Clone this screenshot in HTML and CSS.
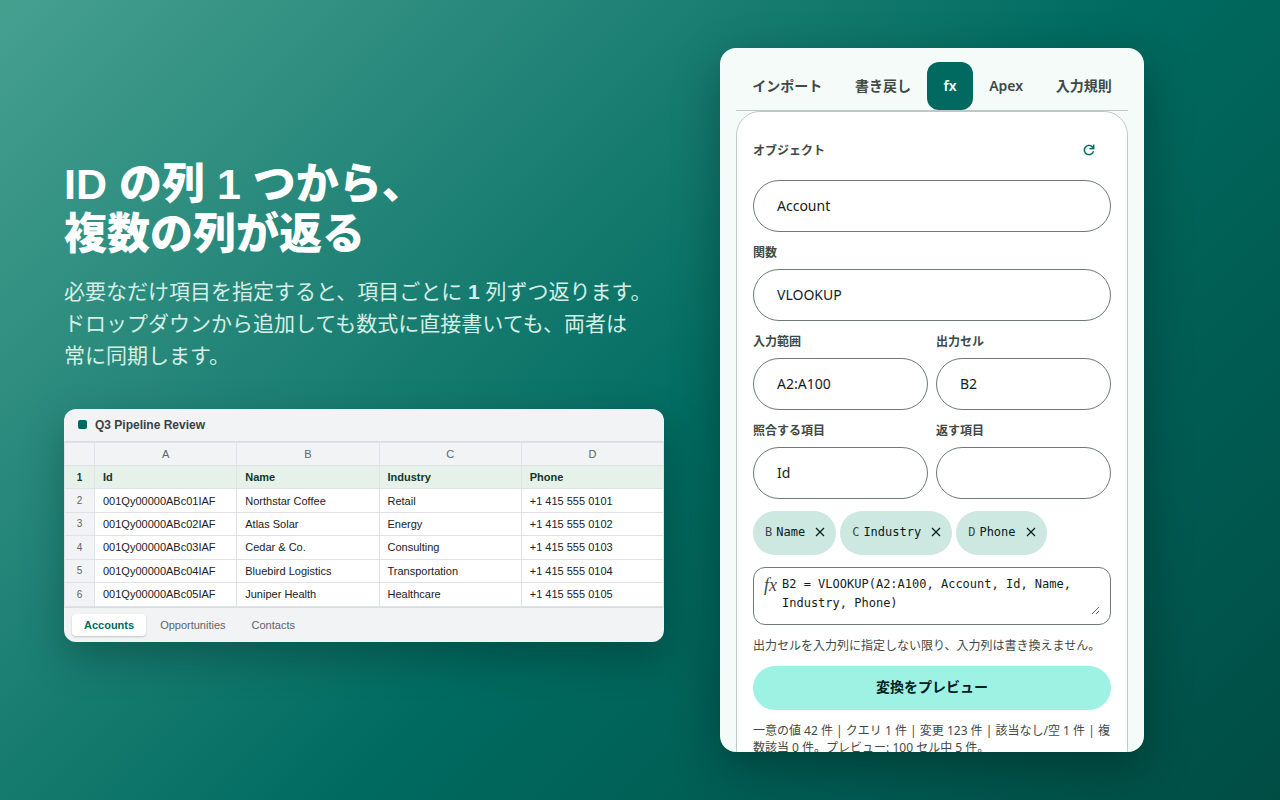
FILE: index.html
```html
<!DOCTYPE html>
<html lang="ja">
<head>
    <meta charset="UTF-8">
    <meta name="viewport" content="width=device-width, initial-scale=1.0">
    <title>ID の列 1 つから、複数の列が返る</title>
    <link rel="stylesheet" href="styles.css">
</head>
<body>

    <main class="promo">
        <h1>ID の列 1 つから、<br>複数の列が返る</h1>
        <p class="lead">必要なだけ項目を指定すると、項目ごとに <b>1</b> 列ずつ返ります。<br>ドロップダウンから追加しても数式に直接書いても、両者は<br>常に同期します。</p>

        <section class="sheet">
            <div class="sheet-title"><span class="sheet-icon"></span>Q3 Pipeline Review</div>
            <table>
                <tbody>
                    <tr><th class="row-no"></th><th>A</th><th>B</th><th>C</th><th>D</th></tr>
                    <tr class="fields"><th class="row-no">1</th><td>Id</td><td>Name</td><td>Industry</td><td>Phone</td></tr>
                    <tr><th class="row-no">2</th><td>001Qy00000ABc01IAF</td><td>Northstar Coffee</td><td>Retail</td><td>+1 415 555 0101</td></tr>
                    <tr><th class="row-no">3</th><td>001Qy00000ABc02IAF</td><td>Atlas Solar</td><td>Energy</td><td>+1 415 555 0102</td></tr>
                    <tr><th class="row-no">4</th><td>001Qy00000ABc03IAF</td><td>Cedar &amp; Co.</td><td>Consulting</td><td>+1 415 555 0103</td></tr>
                    <tr><th class="row-no">5</th><td>001Qy00000ABc04IAF</td><td>Bluebird Logistics</td><td>Transportation</td><td>+1 415 555 0104</td></tr>
                    <tr><th class="row-no">6</th><td>001Qy00000ABc05IAF</td><td>Juniper Health</td><td>Healthcare</td><td>+1 415 555 0105</td></tr>
                </tbody>
            </table>
            <div class="sheet-tabs">
                <button class="sheet-tab active">Accounts</button>
                <button class="sheet-tab">Opportunities</button>
                <button class="sheet-tab">Contacts</button>
            </div>
        </section>
    </main>

    <aside class="panel">
        <nav class="tabs">
            <button class="tab">インポート</button>
            <button class="tab">書き戻し</button>
            <button class="tab active">fx</button>
            <button class="tab">Apex</button>
            <button class="tab">入力規則</button>
        </nav>

        <form class="card">
            <div class="field">
                <div class="label-row">
                    <label for="object">オブジェクト</label>
                    <button type="button" class="refresh" aria-label="更新">
                        <svg width="16" height="16" viewBox="0 0 24 24"><path fill="currentColor" stroke="currentColor" stroke-width="0.3" d="M12 20q-3.350 0-5.675-2.325T4 12t2.325-5.675T12 4q1.725 0 3.300.713T18 6.750V4h2v7h-7V9h4.200q-.8-1.400-2.188-2.200T12 6Q9.500 6 7.750 7.750T6 12t1.750 4.250T12 18q1.925 0 3.475-1.100T17.650 14h2.100q-.7 2.650-2.850 4.325T12 20"/></svg>
                    </button>
                </div>
                <select id="object"><option>Account</option></select>
            </div>

            <div class="field">
                <label for="function">関数</label>
                <select id="function"><option>VLOOKUP</option></select>
            </div>

            <div class="pair">
                <div class="field">
                    <label for="input">入力範囲</label>
                    <input type="text" id="input" value="A2:A100">
                </div>
                <div class="field">
                    <label for="output">出力セル</label>
                    <input type="text" id="output" value="B2">
                </div>
            </div>

            <div class="pair">
                <div class="field">
                    <label for="match">照合する項目</label>
                    <select id="match"><option>Id</option></select>
                </div>
                <div class="field">
                    <label for="return">返す項目</label>
                    <select id="return"><option></option></select>
                </div>
            </div>

            <div class="chips">
                <button type="button" class="chip"><span class="col">B</span>Name<svg width="10" height="10" viewBox="0 0 10 10"><path d="M1 1l8 8M9 1l-8 8"/></svg></button>
                <button type="button" class="chip"><span class="col">C</span>Industry<svg width="10" height="10" viewBox="0 0 10 10"><path d="M1 1l8 8M9 1l-8 8"/></svg></button>
                <button type="button" class="chip"><span class="col">D</span>Phone<svg width="10" height="10" viewBox="0 0 10 10"><path d="M1 1l8 8M9 1l-8 8"/></svg></button>
            </div>

            <div class="formula">
                <label for="formula">fx</label>
                <textarea id="formula" rows="2" spellcheck="false">B2 = VLOOKUP(A2:A100, Account, Id, Name, Industry, Phone)</textarea>
            </div>

            <p class="note">出力セルを入力列に指定しない限り、入力列は書き換えません。</p>
            <button type="button" class="preview">変換をプレビュー</button>
            <p class="status">一意の値 42 件 | クエリ 1 件 | 変更 123 件 | 該当なし/空 1 件 | 複数該当 0 件。プレビュー: 100 セル中 5 件。</p>
        </form>
    </aside>

</body>
</html>
```
FILE: styles.css
```css
* {
    margin: 0;
    padding: 0;
    box-sizing: border-box;
}

body {
    display: grid;
    grid-template-columns: minmax(0, 600px) 424px;
    gap: 56px;
    align-items: center;
    height: 100vh;
    padding: 48px 64px;
    overflow: hidden;
    font-family: "Liberation Sans", "Noto Sans CJK JP", sans-serif;
    background: linear-gradient(135deg, #46a090 0%, #006a60 55%, #004d44 100%);
}

button,
input,
select,
textarea {
    font: inherit;
    color: inherit;
    border: none;
    background: none;
}

button {
    cursor: pointer;
}

/* Left side */

h1 {
    font-size: 43px;
    line-height: 50px;
    font-weight: 800;
    color: #fff;
}

.lead {
    margin: 17px 0 37px;
    font-size: 21px;
    line-height: 32px;
    white-space: nowrap;
    color: #d5efe5;
}

.sheet {
    overflow: hidden;
    border-radius: 12px;
    background: #f1f3f4;
    box-shadow: 0 16px 40px rgba(0, 0, 0, 0.25);
    font-size: 11px;
}

.sheet-title {
    display: flex;
    align-items: center;
    gap: 8px;
    height: 33px;
    padding: 0 14px;
    border-bottom: 1px solid #dadce0;
    font-size: 12px;
    font-weight: bold;
    color: #3c4043;
}

.sheet-icon {
    width: 9px;
    height: 9px;
    border-radius: 2px;
    background: #006a60;
}

table {
    width: 100%;
    height: 165px;
    table-layout: fixed;
    border-collapse: collapse;
    background: #fff;
}

tr {
    height: 23px;
}

th,
td {
    padding: 0 8px;
    border: 1px solid #dfe2e6;
    text-align: left;
    color: #202124;
}

th {
    text-align: center;
    font-weight: normal;
    color: #5f6368;
    background: #f1f3f4;
}

.row-no {
    width: 30px;
    font-size: 10px;
}

.fields th,
.fields td {
    font-weight: bold;
    color: #12372a;
    background: #e6f1ea;
}

.sheet-tabs {
    display: flex;
    gap: 2px;
    padding: 6px 8px;
    border-top: 1px solid #dadce0;
}

.sheet-tab {
    padding: 0 12px;
    border-radius: 4px;
    line-height: 22px;
    color: #5f6368;
}

.sheet-tab.active {
    background: #fff;
    box-shadow: 0 1px 2px rgba(0, 0, 0, 0.2);
    font-weight: bold;
    color: #006a60;
}

/* Add-on panel */

.panel {
    height: 100%;
    min-height: 0;
    padding: 14px 16px 0;
    overflow: hidden;
    border-radius: 16px;
    background: #f4fbf8;
    box-shadow: 0 16px 48px rgba(0, 0, 0, 0.3);
    font-family: "Noto Sans", "Noto Sans CJK JP", sans-serif;
    font-size: 12px;
    line-height: 17px;
    color: #3f4946;
}

.tabs {
    display: flex;
    border-bottom: 1px solid #bec9c5;
}

.tab {
    flex: 1 1 auto;
    height: 48px;
    padding-bottom: 2px;
    border-radius: 12px;
    font-size: 14px;
    font-weight: 600;
    white-space: nowrap;
}

.tab.active {
    background: #006a60;
    color: #fff;
}

.card {
    display: flex;
    flex-direction: column;
    gap: 12px;
    padding: 16px;
    border: 1px solid #bec9c5;
    border-radius: 24px;
    background: #fff;
}

.field {
    display: flex;
    flex-direction: column;
    gap: 8px;
}

.field label {
    font-weight: 600;
}

.label-row {
    display: flex;
    align-items: center;
    justify-content: space-between;
}

.refresh {
    display: grid;
    place-items: center;
    width: 44px;
    height: 44px;
    color: #006a60;
}

.field input,
.field select {
    width: 100%;
    height: 52px;
    padding: 0 23px 2px;
    border: 1px solid #6f7976;
    border-radius: 26px;
    appearance: none;
    font-size: 14px;
    color: #161d1b;
}

.pair {
    display: grid;
    grid-template-columns: 1fr 1fr;
    gap: 8px;
}

.chips {
    display: flex;
    gap: 4px;
}

.chip {
    display: flex;
    align-items: center;
    height: 44px;
    padding: 0 11px 2px 12px;
    border-radius: 22px;
    background: #cce8e0;
    font-family: "DejaVu Sans Mono", monospace;
    color: #05201b;
}

.chip .col {
    margin-right: 4px;
    color: #3f4946;
}

.chip svg {
    margin-left: 10px;
    fill: none;
    stroke: currentColor;
    stroke-width: 1.2;
}

.formula {
    display: flex;
    gap: 4px;
    padding: 7px 10px 9px;
    border: 1px solid #6f7976;
    border-radius: 12px;
}

.formula label {
    width: 14px;
    font: italic 18px/20px "Liberation Serif", serif;
}

.formula textarea {
    flex: 1;
    height: 40px;
    resize: vertical;
    overflow: hidden;
    font-family: "DejaVu Sans Mono", monospace;
    line-height: 19px;
    color: #161d1b;
}

.preview {
    height: 44px;
    padding-bottom: 3px;
    border-radius: 22px;
    background: #9ef2e3;
    font-size: 14px;
    font-weight: 600;
    color: #00201c;
}
```
